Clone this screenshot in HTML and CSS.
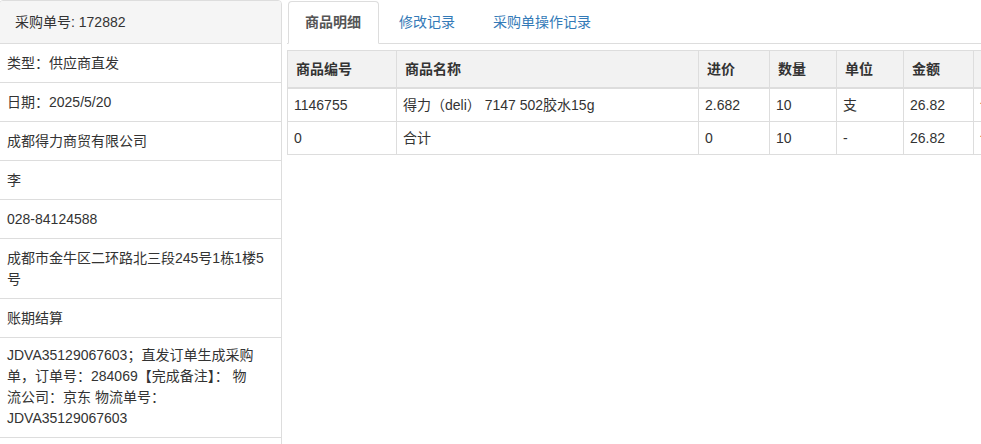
FILE: index.html
```html
<!DOCTYPE html>
<html lang="zh-CN">
<head>
    <meta charset="UTF-8">
    <title>采购单详情</title>
    <link rel="stylesheet" href="styles.css">
</head>
<body>

    <!-- 采购单信息 -->
    <div class="side">
        <div class="side-head">采购单号: 172882</div>
        <ul class="info-list">
            <li>类型：供应商直发</li>
            <li>日期：2025/5/20</li>
            <li>成都得力商贸有限公司</li>
            <li>李</li>
            <li>028-84124588</li>
            <li>成都市金牛区二环路北三段245号1栋1楼5号</li>
            <li>账期结算</li>
            <li class="remark">JDVA35129067603；直发订单生成采购单，订单号：284069【完成备注】： 物<br>流公司：京东 物流单号：JDVA35129067603</li>
            <li>备注</li>
        </ul>
    </div>

    <!-- 明细 -->
    <div class="main">
        <ul class="tabs">
            <li class="active"><a href="#">商品明细</a></li>
            <li><a href="#">修改记录</a></li>
            <li><a href="#">采购单操作记录</a></li>
        </ul>

        <table class="goods">
            <colgroup>
                <col style="width: 109px">
                <col style="width: 302px">
                <col style="width: 71px">
                <col style="width: 67px">
                <col style="width: 67px">
                <col style="width: 70px">
                <col style="width: 80px">
            </colgroup>
            <thead>
                <tr>
                    <th>商品编号</th>
                    <th>商品名称</th>
                    <th>进价</th>
                    <th>数量</th>
                    <th>单位</th>
                    <th>金额</th>
                    <th>操作</th>
                </tr>
            </thead>
            <tbody>
                <tr>
                    <td>1146755</td>
                    <td>得力（deli） 7147 502胶水15g</td>
                    <td>2.682</td>
                    <td>10</td>
                    <td>支</td>
                    <td>26.82</td>
                    <td><a class="op" href="#">详情</a></td>
                </tr>
                <tr>
                    <td>0</td>
                    <td>合计</td>
                    <td>0</td>
                    <td>10</td>
                    <td>-</td>
                    <td>26.82</td>
                    <td><a class="op" href="#">详情</a></td>
                </tr>
            </tbody>
        </table>
    </div>

</body>
</html>
```

FILE: styles.css
```css
body {
    margin: 0;
    font-family: "Liberation Sans", "Noto Sans CJK SC", sans-serif;
    font-size: 14px;
    line-height: 21px;
    color: #333;
    background-color: #fff;
    display: flex;
    align-items: flex-start;
    height: 444px;
    overflow: hidden;
}

/* left panel */
.side {
    width: 281px;
    flex: none;
    margin-left: -1px;
    border: 1px solid #ddd;
    border-radius: 4px;
}
.side-head {
    background-color: #f5f5f5;
    padding: 11px 15px;
    line-height: 20px;
    border-bottom: 1px solid #ddd;
    border-radius: 3px 3px 0 0;
}
.info-list {
    list-style: none;
    margin: 0;
    padding: 0;
}
.info-list li {
    padding: 9px 11px 8px 7px;
    border-bottom: 1px solid #ddd;
}
.info-list li.remark {
    padding-top: 7px;
}

/* right part */
.main {
    flex: 1;
    min-width: 0;
    margin-left: 5px;
    overflow: hidden;
}
.tabs {
    list-style: none;
    margin: 1px 0 0 0;
    padding: 0 0 0 1px;
    display: flex;
    border-bottom: 1px solid #ddd;
}
.tabs li {
    margin-bottom: -1px;
    margin-right: 3px;
}
.tabs a {
    display: block;
    padding: 10px 17px 10px 16px;
    line-height: 21px;
    border: 1px solid transparent;
    border-radius: 4px 4px 0 0;
    color: #337ab7;
    text-decoration: none;
}
.tabs li.active a {
    color: #555;
    font-weight: bold;
    background-color: #fff;
    border-color: #ddd #ddd transparent;
}

.goods {
    margin-top: 6px;
    border-collapse: collapse;
    table-layout: fixed;
    width: 766px;
}
.goods th, .goods td {
    border: 1px solid #ddd;
    text-align: left;
    line-height: 20px;
    white-space: nowrap;
    overflow: hidden;
}
.goods th {
    background-color: #f2f2f2;
    padding: 8px 8px;
    border-bottom-width: 2px;
}
.goods td {
    padding: 6px 6px;
}
.op {
    color: #a94442;
    text-decoration: none;
}
```
